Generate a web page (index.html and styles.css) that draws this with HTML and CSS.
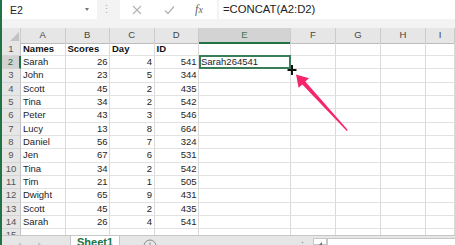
FILE: index.html
```html
<!DOCTYPE html>
<html lang="en">
<head>
  <meta charset="UTF-8">
  <title>Book1 - Excel</title>
  <link rel="stylesheet" href="styles.css">
</head>
<body>
  <div class="app">
    <div class="fbar">
      <div class="namebox"><span>E2</span><span class="caret"></span></div>
      <div class="grip">⋮</div>
      <div class="fxbox">
        <span class="ic">
          <svg width="10" height="10" viewBox="0 0 10 10"><path d="M1 1 L9 9 M9 1 L1 9" stroke="#b3b3b3" stroke-width="1.1" fill="none"/></svg>
        </span>
        <span class="ic">
          <svg width="11" height="10" viewBox="0 0 11 10"><path d="M1 5.5 L4 8.5 L10 1.5" stroke="#b3b3b3" stroke-width="1.2" fill="none"/></svg>
        </span>
        <span class="ic fx"><i>f</i><i class="x">x</i></span>
      </div>
      <div class="formula">=CONCAT(A2:D2)</div>
    </div>
    <div class="gap"></div>

    <div class="sheet">
      <div class="row head">
        <div class="corner"><span class="tri"></span></div>
        <div>A</div><div>B</div><div>C</div><div>D</div>
        <div class="cur">E</div><div>F</div><div>G</div><div>H</div><div>I</div>
      </div>
      <div class="row"><div class="rh">1</div><div class="b">Names</div><div class="b">Scores</div><div class="b">Day</div><div class="b">ID</div><div></div><div></div><div></div><div></div><div></div></div>
      <div class="row"><div class="rh cur">2</div><div>Sarah</div><div class="n">26</div><div class="n">4</div><div class="n">541</div><div class="sel">Sarah264541</div><div></div><div></div><div></div><div></div></div>
      <div class="row"><div class="rh">3</div><div>John</div><div class="n">23</div><div class="n">5</div><div class="n">344</div><div></div><div></div><div></div><div></div><div></div></div>
      <div class="row"><div class="rh">4</div><div>Scott</div><div class="n">45</div><div class="n">2</div><div class="n">435</div><div></div><div></div><div></div><div></div><div></div></div>
      <div class="row"><div class="rh">5</div><div>Tina</div><div class="n">34</div><div class="n">2</div><div class="n">542</div><div></div><div></div><div></div><div></div><div></div></div>
      <div class="row"><div class="rh">6</div><div>Peter</div><div class="n">43</div><div class="n">3</div><div class="n">546</div><div></div><div></div><div></div><div></div><div></div></div>
      <div class="row"><div class="rh">7</div><div>Lucy</div><div class="n">13</div><div class="n">8</div><div class="n">664</div><div></div><div></div><div></div><div></div><div></div></div>
      <div class="row"><div class="rh">8</div><div>Daniel</div><div class="n">56</div><div class="n">7</div><div class="n">324</div><div></div><div></div><div></div><div></div><div></div></div>
      <div class="row"><div class="rh">9</div><div>Jen</div><div class="n">67</div><div class="n">6</div><div class="n">531</div><div></div><div></div><div></div><div></div><div></div></div>
      <div class="row"><div class="rh">10</div><div>Tina</div><div class="n">34</div><div class="n">2</div><div class="n">542</div><div></div><div></div><div></div><div></div><div></div></div>
      <div class="row"><div class="rh">11</div><div>Tim</div><div class="n">21</div><div class="n">1</div><div class="n">505</div><div></div><div></div><div></div><div></div><div></div></div>
      <div class="row"><div class="rh">12</div><div>Dwight</div><div class="n">65</div><div class="n">9</div><div class="n">431</div><div></div><div></div><div></div><div></div><div></div></div>
      <div class="row"><div class="rh">13</div><div>Scott</div><div class="n">45</div><div class="n">2</div><div class="n">435</div><div></div><div></div><div></div><div></div><div></div></div>
      <div class="row"><div class="rh">14</div><div>Sarah</div><div class="n">26</div><div class="n">4</div><div class="n">541</div><div></div><div></div><div></div><div></div><div></div></div>
      <div class="row"><div class="rh">15</div><div></div><div></div><div></div><div></div><div></div><div></div><div></div><div></div><div></div></div>
    </div>

    <div class="tabs">
      <div class="nav"><span class="tl"></span><span class="tr"></span></div>
      <div class="tab">Sheet1</div>
      <div class="add">
        <svg width="14" height="14" viewBox="0 0 14 14"><circle cx="7" cy="7" r="6" stroke="#8a8a8a" fill="none"/><path d="M7 3.5 V10.5 M3.5 7 H10.5" stroke="#8a8a8a"/></svg>
      </div>
      <div class="hscroll">
        <div class="dots">
          <svg width="3" height="8" viewBox="0 0 3 8"><circle cx="1.5" cy="1.5" r="0.8" fill="#9a9a9a"/><circle cx="1.5" cy="5" r="0.8" fill="#9a9a9a"/></svg>
        </div>
        <div class="sbtn"><span class="tl dark"></span></div>
        <div class="track"></div>
      </div>
    </div>
  </div>

  <svg class="overlay" width="455" height="245" viewBox="0 0 455 245">
    <polygon points="296,74.5 309,78.3 305.3,81.6 347.8,130 346.8,131 302.3,84.4 298.6,87.7" fill="#f5256b"/>
    <path d="M287.5 70 H296.5 M292 65 V75" stroke="#111" stroke-width="2"/>
  </svg>
</body>
</html>
```

FILE: styles.css
```css
body {
  margin: 0;
  width: 455px;
  height: 245px;
  overflow: hidden;
  position: relative;
  background: #fff;
  font-family: "Liberation Sans", Arial, sans-serif;
}
.app {
  height: 245px;
  display: flex;
  flex-direction: column;
  border-left: 2px solid #217346;
}

/* formula bar */
.fbar {
  display: flex;
  height: 19px;
  background: #f3f3f3;
}
.namebox {
  width: 95px;
  background: #fff;
  display: flex;
  align-items: center;
  justify-content: space-between;
  padding: 0 8px;
  box-sizing: border-box;
  font-size: 10.5px;
  color: #222;
}
.caret {
  border-top: 3px solid #777;
  border-left: 2.5px solid transparent;
  border-right: 2.5px solid transparent;
}
.grip {
  width: 18px;
  text-align: center;
  color: #b0b0b0;
  font-size: 11px;
  line-height: 19px;
}
.fxbox {
  width: 97px;
  margin-left: 5px;
  background: #fff;
  display: flex;
  align-items: center;
}
.ic {
  width: 33px;
  display: flex;
  justify-content: center;
}
.fx {
  width: 26px;
  font-family: "Liberation Serif", serif;
  font-size: 12px;
  color: #666;
}
.fx .x {
  font-size: 10px;
  margin-top: 2px;
}
.formula {
  flex: 1;
  margin-left: 2px;
  padding-left: 4px;
  background: #fff;
  font-size: 11.3px;
  line-height: 19px;
  color: #222;
}
.gap {
  height: 9.3px;
  background: #f3f3f3;
}

/* grid */
.sheet {
  flex: 1;
  overflow: hidden;
}
.row {
  display: grid;
  grid-template-columns: 19px 44.5px 44.5px 44.5px 44.5px 92px 45px 45px 45px 1fr;
  height: 13.33px;
}
.row > div {
  box-sizing: border-box;
  border-right: 1px solid #dadada;
  border-bottom: 1px solid #e2e2e2;
  padding: 0 2px;
  font-size: 9.5px;
  line-height: 12.33px;
  color: #1e1e1e;
  white-space: nowrap;
}
.row > .n {
  text-align: right;
  padding-right: 1.5px;
}
.row > .b {
  font-weight: bold;
  color: #111;
}
.row > .rh {
  background: #e6e6e6;
  text-align: center;
  color: #555;
  padding: 0;
  border-right: 1px solid #c4c4c4;
  border-bottom: 1px solid #d4d4d4;
}
.row > .rh.cur {
  background: #d2d2d2;
  color: #1e6a40;
  border-right: 2px solid #217346;
}
.row > .sel {
  position: relative;
}
.row > .sel::after {
  content: '';
  position: absolute;
  left: 0;
  top: -1px;
  right: -1px;
  bottom: -1px;
  border: 2px solid #3b7d58;
}

.head {
  height: 14.4px;
}
.head > div {
  background: #e6e6e6;
  text-align: center;
  color: #444;
  border-right: 1px solid #cbcbcb;
  border-bottom: 1px solid #bcbcbc;
  line-height: 13.4px;
}
.head > .cur {
  background: #d3d3d3;
  color: #3d7758;
  border-bottom: 2px solid #217346;
}
.head > .corner {
  display: flex;
  justify-content: flex-end;
  align-items: flex-end;
  padding: 0 1.5px 1.5px 0;
}
.tri {
  width: 0;
  height: 0;
  border-left: 9px solid transparent;
  border-bottom: 9px solid #c2c2c2;
}

/* sheet tabs */
.tabs {
  height: 10.5px;
  display: flex;
  background: #e6e6e6;
  border-top: 1px solid #c6c6c6;
  box-sizing: border-box;
  overflow: hidden;
}
.nav {
  width: 68px;
  display: flex;
  align-items: flex-start;
  gap: 17px;
  padding: 6px 0 0 15px;
  box-sizing: border-box;
}
.tl, .tr {
  width: 0;
  height: 0;
  border-top: 4px solid transparent;
  border-bottom: 4px solid transparent;
}
.tl {
  border-right: 4px solid #c4c4c4;
}
.tr {
  border-left: 4px solid #c4c4c4;
}
.tl.dark {
  border-right-color: #6e6e6e;
}
.tab {
  width: 50px;
  background: #fff;
  border-left: 1px solid #c6c6c6;
  border-right: 1px solid #c6c6c6;
  margin-top: -1px;
  box-sizing: border-box;
  padding-top: 2.4px;
  text-align: center;
  font-size: 11px;
  line-height: 11px;
  font-weight: bold;
  color: #217346;
}
.add {
  margin: 3px 0 0 23px;
}
.hscroll {
  margin-left: auto;
  width: 158px;
  display: flex;
}
.dots {
  width: 16px;
  padding: 5px 6px 0 0;
  box-sizing: border-box;
  display: flex;
  justify-content: center;
}
.sbtn {
  width: 14px;
  margin-top: 2px;
  background: #fff;
  border: 1px solid #c6c6c6;
  box-sizing: border-box;
  display: flex;
  padding: 3px 0 0 4px;
}
.track {
  flex: 1;
  margin-top: 2px;
  background: #fff;
  border-top: 1px solid #c6c6c6;
  border-left: 1px solid #c6c6c6;
}

.overlay {
  position: absolute;
  left: 0;
  top: 0;
  pointer-events: none;
}
```
